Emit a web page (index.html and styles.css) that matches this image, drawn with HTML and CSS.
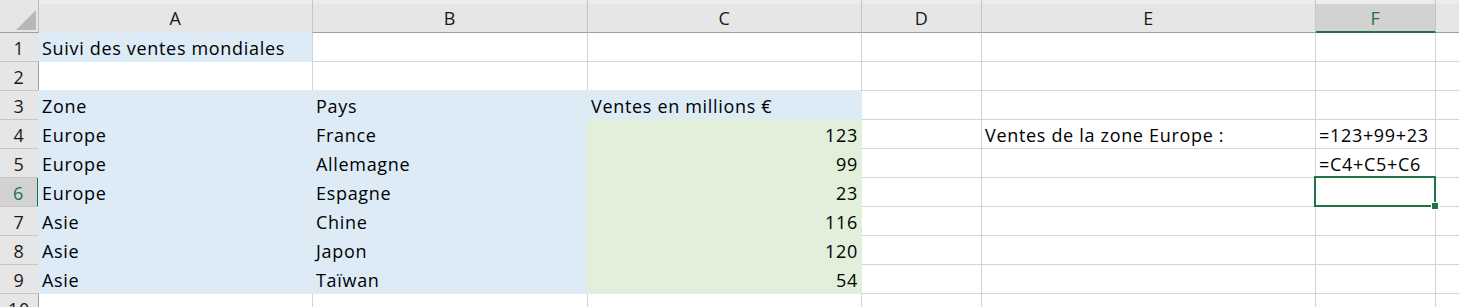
FILE: index.html
```html
<!DOCTYPE html>
<html lang="fr">
<head>
<meta charset="utf-8">
<title>Suivi des ventes</title>
<link rel="stylesheet" href="styles.css">
</head>
<body>
<div class="sheet">
  <div class="corner"><span class="tri"></span></div>
  <div class="ch">A</div><div class="ch">B</div><div class="ch">C</div><div class="ch">D</div><div class="ch">E</div><div class="ch ch-sel">F</div><div class="ch ch-last"></div>

  <div class="rh">1</div><div class="c blue edge">Suivi des ventes mondiales</div><div class="c"></div><div class="c"></div><div class="c"></div><div class="c"></div><div class="c"></div><div class="c"></div>
  <div class="rh">2</div><div class="c"></div><div class="c"></div><div class="c"></div><div class="c"></div><div class="c"></div><div class="c"></div><div class="c"></div>
  <div class="rh">3</div><div class="c blue">Zone</div><div class="c blue">Pays</div><div class="c blue">Ventes en millions €</div><div class="c"></div><div class="c"></div><div class="c"></div><div class="c"></div>
  <div class="rh">4</div><div class="c blue">Europe</div><div class="c blue">France</div><div class="c green num">123</div><div class="c"></div><div class="c">Ventes de la zone Europe :</div><div class="c">=123+99+23</div><div class="c"></div>
  <div class="rh">5</div><div class="c blue">Europe</div><div class="c blue">Allemagne</div><div class="c green num">99</div><div class="c"></div><div class="c"></div><div class="c">=C4+C5+C6</div><div class="c"></div>
  <div class="rh rh-sel">6</div><div class="c blue">Europe</div><div class="c blue">Espagne</div><div class="c green num">23</div><div class="c"></div><div class="c"></div><div class="c sel"><span class="handle"></span></div><div class="c"></div>
  <div class="rh">7</div><div class="c blue">Asie</div><div class="c blue">Chine</div><div class="c green num">116</div><div class="c"></div><div class="c"></div><div class="c"></div><div class="c"></div>
  <div class="rh">8</div><div class="c blue">Asie</div><div class="c blue">Japon</div><div class="c green num">120</div><div class="c"></div><div class="c"></div><div class="c"></div><div class="c"></div>
  <div class="rh">9</div><div class="c blue">Asie</div><div class="c blue">Taïwan</div><div class="c green num">54</div><div class="c"></div><div class="c"></div><div class="c"></div><div class="c"></div>
  <div class="rh">10</div><div class="c"></div><div class="c"></div><div class="c"></div><div class="c"></div><div class="c"></div><div class="c"></div><div class="c"></div>
</div>
</body>
</html>
```

FILE: styles.css
```css
html, body {
  margin: 0;
  padding: 0;
  background: #fff;
  overflow: hidden;
}
body {
  width: 1459px;
  height: 307px;
  font-family: "Open Sans", "Liberation Sans", sans-serif;
  font-size: 18px;
  letter-spacing: 0.68px;
  color: #000;
}
.sheet {
  display: grid;
  grid-template-columns: 39px 274px 275px 274px 120px 334px 120px 60px;
  grid-template-rows: 33px repeat(10, 29px);
}
.corner {
  background: #e6e6e6;
  border-right: 1px solid #bcbcbc;
  border-bottom: 1px solid #9e9e9e;
  position: relative;
}
.tri {
  position: absolute;
  left: 16px;
  top: 10px;
  width: 20px;
  height: 20px;
  background: #b7b7b7;
  clip-path: polygon(100% 0, 100% 100%, 0 100%);
}
.ch {
  background: linear-gradient(#ececec 0 4px, #e6e6e6 4px);
  border-right: 1px solid #c6c6c6;
  border-bottom: 1px solid #9e9e9e;
  display: flex;
  align-items: flex-end;
  justify-content: center;
  padding-bottom: 3px;
  line-height: 22px;
  color: #1a1a1a;
}
.ch-last { border-right: none; }
.ch-sel {
  background: linear-gradient(#ececec 0 4px, #d2d2d2 4px);
  border-bottom: 2px solid #217346;
  padding-bottom: 2px;
  color: #217346;
}
.rh {
  background: #e6e6e6;
  border-right: 1px solid #9e9e9e;
  border-bottom: 1px solid #c6c6c6;
  display: flex;
  align-items: flex-end;
  justify-content: center;
  padding-bottom: 2px;
  line-height: 22px;
  color: #1a1a1a;
}
.rh-sel {
  background: #d2d2d2;
  border-right: 2px solid #217346;
  color: #217346;
}
.c {
  border-right: 1px solid #d4d4d4;
  border-bottom: 1px solid #d4d4d4;
  display: flex;
  align-items: flex-end;
  padding: 0 3px 2px 3px;
  line-height: 22px;
  white-space: nowrap;
  overflow: visible;
}
.blue {
  background: #ddebf7;
  border-color: #ddebf7;
  box-shadow: -1px -1px 0 0 #ddebf7;
}
.edge { border-right-color: #d4d4d4; }
.green {
  background: #e2efda;
  border-color: #e2efda;
  box-shadow: -1px -1px 0 0 #e2efda;
}
.num {
  justify-content: flex-end;
  padding-right: 3px;
}
.sel {
  position: relative;
}
.sel::before {
  content: "";
  position: absolute;
  left: -2px;
  top: -2px;
  right: -1px;
  bottom: -1px;
  border: 2px solid #217346;
}
.handle {
  position: absolute;
  right: -4px;
  bottom: -4px;
  width: 6px;
  height: 6px;
  background: #217346;
  border: 1px solid #fff;
  z-index: 2;
}
```
